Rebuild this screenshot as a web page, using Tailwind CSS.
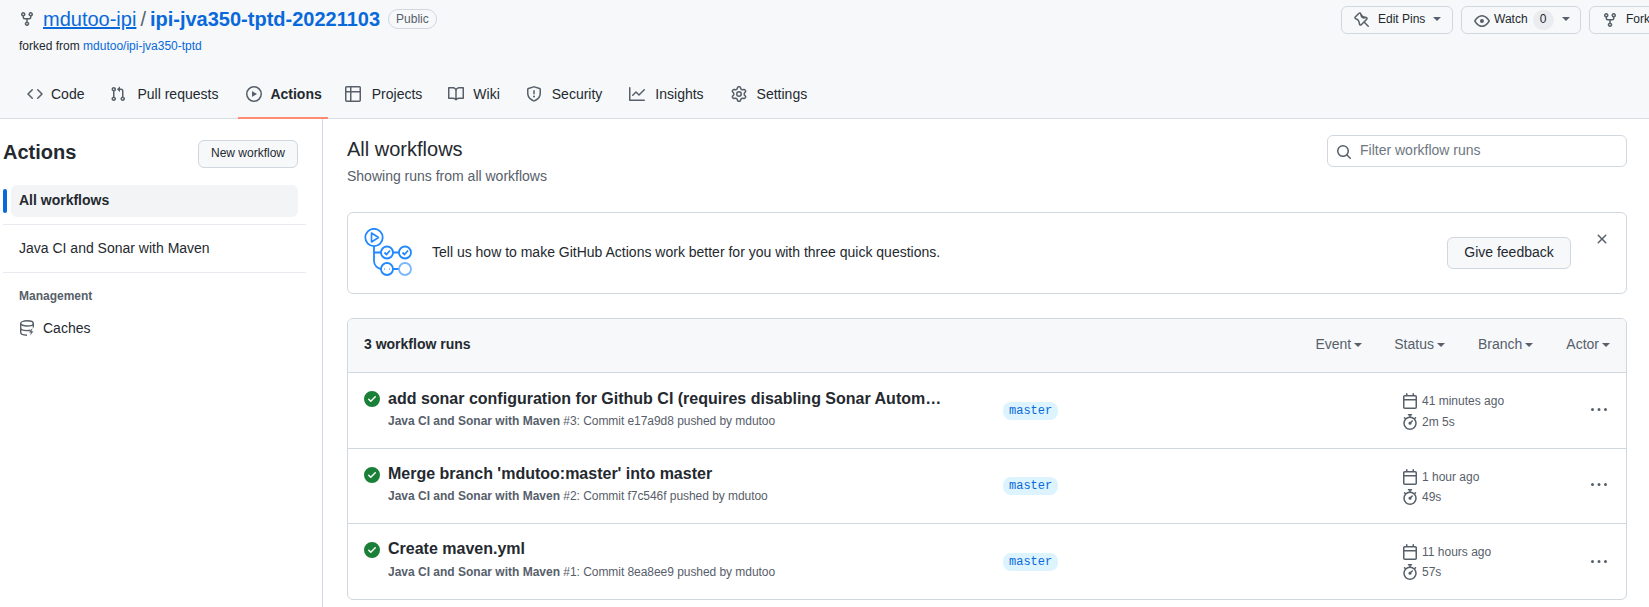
<!DOCTYPE html>
<html lang="en">

<head>
    <meta charset="UTF-8" />
    <meta name="viewport" content="width=device-width, initial-scale=1.0" />
    <title>Actions · mdutoo-ipi/ipi-jva350-tptd-20221103</title>
    <script src="https://cdn.jsdelivr.net/npm/@tailwindcss/browser@4"></script>
</head>

<body class="h-[607px] overflow-hidden bg-white text-sm text-[#24292f] font-['Liberation_Sans',Arial,sans-serif]">
    <!-- Icons used more than once -->
    <svg class="hidden">
        <symbol id="i-fork" viewBox="0 0 16 16"><path d="M5 5.372v.878c0 .414.336.75.75.75h4.5a.75.75 0 0 0 .75-.75v-.878a2.25 2.25 0 1 1 1.5 0v.878a2.25 2.25 0 0 1-2.25 2.25h-1.5v2.128a2.251 2.251 0 1 1-1.5 0V8.5h-1.5A2.25 2.25 0 0 1 3.5 6.25v-.878a2.25 2.25 0 1 1 1.5 0ZM5 3.25a.75.75 0 1 0-1.5 0 .75.75 0 0 0 1.5 0Zm6.75.75a.75.75 0 1 0 0-1.5.75.75 0 0 0 0 1.5Zm-3 8.75a.75.75 0 1 0-1.5 0 .75.75 0 0 0 1.5 0Z"/></symbol>
        <symbol id="i-check" viewBox="0 0 16 16"><path d="M8 16A8 8 0 1 1 8 0a8 8 0 0 1 0 16Zm3.78-9.72a.751.751 0 0 0-.018-1.042.751.751 0 0 0-1.042-.018L6.75 9.19 5.28 7.72a.751.751 0 0 0-1.042.018.751.751 0 0 0-.018 1.042l2 2a.75.75 0 0 0 1.06 0Z"/></symbol>
        <symbol id="i-calendar" viewBox="0 0 16 16"><path d="M4.75 0a.75.75 0 0 1 .75.75V2h5V.75a.75.75 0 0 1 1.5 0V2h1.25c.966 0 1.75.784 1.75 1.75v10.5A1.75 1.75 0 0 1 13.25 16H2.75A1.75 1.75 0 0 1 1 14.25V3.75C1 2.784 1.784 2 2.75 2H4V.75A.75.75 0 0 1 4.75 0ZM2.5 7.5v6.75c0 .138.112.25.25.25h10.5a.25.25 0 0 0 .25-.25V7.5Zm10.75-4H2.75a.25.25 0 0 0-.25.25V6h11V3.75a.25.25 0 0 0-.25-.25Z"/></symbol>
        <symbol id="i-stopwatch" viewBox="0 0 16 16"><path d="M5.75.75A.75.75 0 0 1 6.5 0h3a.75.75 0 0 1 0 1.5h-.75v1l-.001.041a6.724 6.724 0 0 1 3.464 1.435l.007-.006.75-.75a.75.75 0 1 1 1.06 1.06l-.75.75-.006.007a6.75 6.75 0 1 1-10.548 0L2.72 5.03l-.75-.75a.751.751 0 0 1 .018-1.042.751.751 0 0 1 1.042-.018l.75.75.007.006A6.72 6.72 0 0 1 7.25 2.541V1.5H6.5a.75.75 0 0 1-.75-.75ZM8 14.5a5.25 5.25 0 1 0-.001-10.501A5.25 5.25 0 0 0 8 14.5Zm.389-6.7 1.33-1.33a.75.75 0 1 1 1.061 1.06L9.45 8.861A1.503 1.503 0 0 1 8 10.75a1.499 1.499 0 1 1 .389-2.95Z"/></symbol>
        <symbol id="i-kebab" viewBox="0 0 16 16"><path d="M8 9a1.5 1.5 0 1 0 0-3 1.5 1.5 0 0 0 0 3ZM1.5 9a1.5 1.5 0 1 0 0-3 1.5 1.5 0 0 0 0 3Zm13 0a1.5 1.5 0 1 0 0-3 1.5 1.5 0 0 0 0 3Z"/></symbol>
    </svg>

    <!-- Repo header -->
    <header class="h-[119px] bg-[#f6f8fa] border-b border-[#d8dee4] flex flex-col">
        <div class="flex items-start pl-[19px] pt-[6px]">
            <div>
                <div class="flex items-center h-[25px]">
                    <svg class="w-4 h-4 fill-[#57606a] mr-2" viewBox="0 0 16 16"><use href="#i-fork" /></svg>
                    <a class="text-xl text-[#0969da] underline">mdutoo-ipi</a>
                    <span class="text-xl text-[#57606a] mx-[4px]">/</span>
                    <a class="text-xl font-bold text-[#0969da]">ipi-jva350-tptd-20221103</a>
                    <span class="ml-2 px-[7px] h-[20px] leading-[18px] rounded-full border border-[#d0d7de] text-xs text-[#57606a]">Public</span>
                </div>
                <p class="mt-[6px] text-xs leading-[18px]">forked from <a class="text-[#0969da]">mdutoo/ipi-jva350-tptd</a></p>
            </div>
            <div class="ml-auto w-[308px] overflow-hidden flex gap-2 shrink-0 text-xs">
                <button class="shrink-0 w-[112px] h-[28px] flex items-center pl-[12px] rounded-md border border-[#d0d7de] bg-[#f6f8fa]">
                    <svg class="w-4 h-4 fill-[#57606a] mr-[8px]" viewBox="0 0 16 16"><path d="M4.456.734a1.75 1.75 0 0 1 2.826.504l.613 1.327a3.081 3.081 0 0 0 2.084 1.707l2.454.584c1.332.317 1.8 1.972.832 2.94L11.06 10l3.72 3.72a.748.748 0 0 1-.332 1.265.75.75 0 0 1-.729-.205L10 11.06l-2.204 2.205c-.968.968-2.623.5-2.94-.832l-.584-2.454a3.081 3.081 0 0 0-1.707-2.084l-1.327-.613a1.75 1.75 0 0 1-.504-2.826L4.456.734ZM5.92 1.866a.25.25 0 0 0-.404-.072L1.794 5.516a.25.25 0 0 0 .072.404l1.328.613A4.582 4.582 0 0 1 5.73 9.63l.584 2.454a.25.25 0 0 0 .42.12l5.47-5.47a.25.25 0 0 0-.12-.42L9.63 6.73a4.581 4.581 0 0 1-3.098-2.537L5.92 1.866Z"/></svg>
                    <span class="mb-[2px]">Edit Pins</span>
                    <span class="ml-[8px] mb-[2px] border-x-[4px] border-x-transparent border-t-[4px] border-t-[#57606a]"></span>
                </button>
                <button class="shrink-0 w-[120px] h-[28px] flex items-center pl-[12px] rounded-md border border-[#d0d7de] bg-[#f6f8fa]">
                    <svg class="w-4 h-4 fill-[#57606a] mr-[4px] mt-[2px]" viewBox="0 0 16 16"><path d="M8 2c1.981 0 3.671.992 4.933 2.078 1.27 1.091 2.187 2.345 2.637 3.023a1.62 1.62 0 0 1 0 1.798c-.45.678-1.367 1.932-2.637 3.023C11.67 13.008 9.981 14 8 14c-1.981 0-3.671-.992-4.933-2.078C1.797 10.83.88 9.576.43 8.898a1.62 1.62 0 0 1 0-1.798c.45-.677 1.367-1.931 2.637-3.022C4.33 2.992 6.019 2 8 2ZM1.679 7.932a.12.12 0 0 0 0 .136c.411.622 1.241 1.75 2.366 2.717C5.176 11.758 6.527 12.5 8 12.5c1.473 0 2.825-.742 3.955-1.715 1.124-.967 1.954-2.096 2.366-2.717a.12.12 0 0 0 0-.136c-.412-.621-1.242-1.75-2.366-2.717C10.824 4.242 9.473 3.5 8 3.5c-1.473 0-2.825.742-3.955 1.715-1.124.967-1.954 2.096-2.366 2.717ZM8 10a2 2 0 1 1-.001-3.999A2 2 0 0 1 8 10Z"/></svg>
                    <span class="mb-[2px]">Watch</span>
                    <span class="ml-[5px] w-[21px] h-[20px] leading-[18px] rounded-full bg-[#eaecef] text-[#24292f]">0</span>
                    <span class="ml-[8px] mb-[2px] border-x-[4px] border-x-transparent border-t-[4px] border-t-[#57606a]"></span>
                </button>
                <button class="shrink-0 w-[100px] h-[28px] flex items-center pl-[12px] rounded-md border border-[#d0d7de] bg-[#f6f8fa]">
                    <svg class="w-4 h-4 fill-[#57606a] mr-[8px]" viewBox="0 0 16 16"><use href="#i-fork" /></svg>
                    <span class="mb-[2px]">Fork</span>
                </button>
            </div>
        </div>

        <!-- Tabs -->
        <nav class="mt-auto flex h-[48px] pl-[19px] translate-y-px">
            <a class="flex items-center gap-[8px] px-2 mr-[10px] border-b-2 border-transparent">
                <svg class="w-4 h-4 fill-[#57606a]" viewBox="0 0 16 16"><path d="m11.28 3.22 4.25 4.25a.75.75 0 0 1 0 1.06l-4.25 4.25a.749.749 0 0 1-1.275-.326.749.749 0 0 1 .215-.734L13.94 8l-3.72-3.72a.749.749 0 0 1 .326-1.275.749.749 0 0 1 .734.215Zm-6.56 0a.751.751 0 0 1 1.042.018.751.751 0 0 1 .018 1.042L2.06 8l3.72 3.72a.749.749 0 0 1-.326 1.275.749.749 0 0 1-.734-.215L.47 8.53a.75.75 0 0 1 0-1.06Z"/></svg>
                Code</a>
            <a class="flex items-center gap-[11px] px-2 mr-[12px] border-b-2 border-transparent">
                <svg class="w-4 h-4 fill-[#57606a]" viewBox="0 0 16 16"><path d="M1.5 3.25a2.25 2.25 0 1 1 3 2.122v5.256a2.251 2.251 0 1 1-1.5 0V5.372A2.25 2.25 0 0 1 1.5 3.25Zm5.677-.177L9.573.677A.25.25 0 0 1 10 .854V2.5h1A2.5 2.5 0 0 1 13.5 5v5.628a2.251 2.251 0 1 1-1.5 0V5a1 1 0 0 0-1-1h-1v1.646a.25.25 0 0 1-.427.177L7.177 3.427a.25.25 0 0 1 0-.354ZM3.75 2.5a.75.75 0 1 0 0 1.5.75.75 0 0 0 0-1.5Zm0 9.5a.75.75 0 1 0 0 1.5.75.75 0 0 0 0-1.5Zm8.25.75a.75.75 0 1 0 1.5 0 .75.75 0 0 0-1.5 0Z"/></svg>
                Pull requests</a>
            <a class="flex items-center gap-[8px] pl-2 pr-[6px] mr-[9px] font-bold border-b-2 border-[#fd8c73]">
                <svg class="w-4 h-4 fill-[#57606a]" viewBox="0 0 16 16"><path d="M8 0a8 8 0 1 1 0 16A8 8 0 0 1 8 0ZM1.5 8a6.5 6.5 0 1 0 13 0 6.5 6.5 0 0 0-13 0Zm4.879-2.773 4.264 2.559a.25.25 0 0 1 0 .428l-4.264 2.559A.25.25 0 0 1 6 10.559V5.442a.25.25 0 0 1 .379-.215Z"/></svg>
                Actions</a>
            <a class="flex items-center gap-[11px] px-2 mr-[10px] border-b-2 border-transparent">
                <svg class="w-4 h-4 fill-[#57606a]" viewBox="0 0 16 16"><path d="M0 1.75C0 .784.784 0 1.75 0h12.5C15.216 0 16 .784 16 1.75v12.5A1.75 1.75 0 0 1 14.25 16H1.75A1.75 1.75 0 0 1 0 14.25ZM6.5 6.5v8h7.75a.25.25 0 0 0 .25-.25V6.5Zm8-1.5V1.75a.25.25 0 0 0-.25-.25H6.5V5Zm-13 1.5v7.75c0 .138.112.25.25.25H5v-8ZM5 5V1.5H1.75a.25.25 0 0 0-.25.25V5Z"/></svg>
                Projects</a>
            <a class="flex items-center gap-[9px] px-2 mr-[10px] border-b-2 border-transparent">
                <svg class="w-4 h-4 fill-[#57606a]" viewBox="0 0 16 16"><path d="M0 1.75A.75.75 0 0 1 .75 1h4.253c1.227 0 2.317.59 3 1.501A3.743 3.743 0 0 1 11.006 1h4.245a.75.75 0 0 1 .75.75v10.5a.75.75 0 0 1-.75.75h-4.507a2.25 2.25 0 0 0-1.591.659l-.622.621a.75.75 0 0 1-1.06 0l-.622-.621A2.25 2.25 0 0 0 5.258 13H.75a.75.75 0 0 1-.75-.75Zm7.251 10.324.004-5.073-.002-2.253A2.25 2.25 0 0 0 5.003 2.5H1.5v9h3.757a3.75 3.75 0 0 1 1.994.574ZM8.755 4.75l-.004 7.322a3.752 3.752 0 0 1 1.992-.572H14.5v-9h-3.495a2.25 2.25 0 0 0-2.25 2.25Z"/></svg>
                Wiki</a>
            <a class="flex items-center gap-[10px] px-2 mr-[11px] border-b-2 border-transparent">
                <svg class="w-4 h-4 fill-[#57606a]" viewBox="0 0 16 16"><path d="M7.467.133a1.748 1.748 0 0 1 1.066 0l5.25 1.68A1.75 1.75 0 0 1 15 3.48V7c0 1.566-.32 3.182-1.303 4.682-.983 1.498-2.585 2.813-5.032 3.855a1.697 1.697 0 0 1-1.33 0c-2.447-1.042-4.049-2.357-5.032-3.855C1.32 10.182 1 8.566 1 7V3.48a1.75 1.75 0 0 1 1.217-1.667Zm.61 1.429a.25.25 0 0 0-.153 0l-5.25 1.68a.25.25 0 0 0-.174.238V7c0 1.358.275 2.666 1.057 3.86.784 1.194 2.121 2.34 4.366 3.297a.196.196 0 0 0 .154 0c2.245-.956 3.582-2.104 4.366-3.298C13.225 9.666 13.5 8.36 13.5 7V3.48a.251.251 0 0 0-.174-.237l-5.25-1.68ZM8.75 4.75v3a.75.75 0 0 1-1.5 0v-3a.75.75 0 0 1 1.5 0ZM9 10.5a1 1 0 1 1-2 0 1 1 0 0 1 2 0Z"/></svg>
                Security</a>
            <a class="flex items-center gap-[10px] px-2 mr-[11px] border-b-2 border-transparent">
                <svg class="w-4 h-4 fill-[#57606a]" viewBox="0 0 16 16"><path d="M1.5 1.75V13.5h13.75a.75.75 0 0 1 0 1.5H.75a.75.75 0 0 1-.75-.75V1.75a.75.75 0 0 1 1.5 0Zm14.28 2.53-5.25 5.25a.75.75 0 0 1-1.06 0L7 7.06 4.28 9.78a.751.751 0 0 1-1.042-.018.751.751 0 0 1-.018-1.042l3.25-3.25a.75.75 0 0 1 1.06 0L10 7.94l4.72-4.72a.751.751 0 0 1 1.042.018.751.751 0 0 1 .018 1.042Z"/></svg>
                Insights</a>
            <a class="flex items-center gap-[10px] px-2 border-b-2 border-transparent">
                <svg class="w-4 h-4 fill-[#57606a]" viewBox="0 0 16 16"><path d="M8 0a8.2 8.2 0 0 1 .701.031C9.444.095 9.99.645 10.16 1.29l.288 1.107c.018.066.079.158.212.224.231.114.454.243.668.386.123.082.233.09.299.071l1.103-.303c.644-.176 1.392.021 1.82.63.27.385.506.792.704 1.218.315.675.111 1.422-.364 1.891l-.814.806c-.049.048-.098.147-.088.294.016.257.016.515 0 .772-.01.147.038.246.088.294l.814.806c.475.469.679 1.216.364 1.891a7.977 7.977 0 0 1-.704 1.217c-.428.61-1.176.807-1.82.63l-1.102-.302c-.067-.019-.177-.011-.3.071a5.909 5.909 0 0 1-.668.386c-.133.066-.194.158-.211.224l-.29 1.106c-.168.646-.715 1.196-1.458 1.26a8.006 8.006 0 0 1-1.402 0c-.743-.064-1.289-.614-1.458-1.26l-.289-1.106c-.018-.066-.079-.158-.212-.224a5.738 5.738 0 0 1-.668-.386c-.123-.082-.233-.09-.299-.071l-1.103.303c-.644.176-1.392-.021-1.82-.63a8.12 8.12 0 0 1-.704-1.218c-.315-.675-.111-1.422.363-1.891l.815-.806c.05-.048.098-.147.088-.294a6.214 6.214 0 0 1 0-.772c.01-.147-.038-.246-.088-.294l-.815-.806C.635 6.045.431 5.298.746 4.623a7.92 7.92 0 0 1 .704-1.217c.428-.61 1.176-.807 1.82-.63l1.102.302c.067.019.177.011.3-.071.214-.143.437-.272.668-.386.133-.066.194-.158.211-.224l.29-1.106C6.009.645 6.556.095 7.299.03 7.53.01 7.764 0 8 0Zm-.571 1.525c-.036.003-.108.036-.137.146l-.289 1.105c-.147.561-.549.967-.998 1.189-.173.086-.34.183-.5.29-.417.278-.97.423-1.529.27l-1.103-.303c-.109-.03-.175.016-.195.045-.22.312-.412.644-.573.99-.014.031-.021.11.059.19l.815.806c.411.406.562.957.53 1.456a4.709 4.709 0 0 0 0 .582c.032.499-.119 1.05-.53 1.456l-.815.806c-.081.08-.073.159-.059.19.162.346.353.677.573.989.02.03.085.076.195.046l1.102-.303c.56-.153 1.113-.008 1.53.27.161.107.328.204.501.29.447.222.85.629.997 1.189l.289 1.105c.029.109.101.143.137.146a6.6 6.6 0 0 0 1.142 0c.036-.003.108-.036.137-.146l.289-1.105c.147-.561.549-.967.998-1.189.173-.086.34-.183.5-.29.417-.278.97-.423 1.529-.27l1.103.303c.109.029.175-.016.195-.045.22-.313.411-.644.573-.99.014-.031.021-.11-.059-.19l-.815-.806c-.411-.406-.562-.957-.53-1.456a4.709 4.709 0 0 0 0-.582c-.032-.499.119-1.05.53-1.456l.815-.806c.081-.08.073-.159.059-.19a6.464 6.464 0 0 0-.573-.989c-.02-.03-.085-.076-.195-.046l-1.102.303c-.56.153-1.113.008-1.53-.27a4.44 4.44 0 0 0-.501-.29c-.447-.222-.85-.629-.997-1.189l-.289-1.105c-.029-.11-.101-.143-.137-.146a6.6 6.6 0 0 0-1.142 0ZM11 8a3 3 0 1 1-6 0 3 3 0 0 1 6 0ZM9.5 8a1.5 1.5 0 1 0-3.001.001A1.5 1.5 0 0 0 9.5 8Z"/></svg>
                Settings</a>
        </nav>
    </header>

    <div class="flex h-[488px]">
        <!-- Sidebar -->
        <aside class="w-[323px] shrink-0 border-r border-[#d0d7de] pl-[3px] pr-[16px]">
            <div class="flex items-center justify-between pt-[21px] pr-[8px]">
                <h1 class="text-xl font-bold leading-[24px] mb-[4px]">Actions</h1>
                <button class="w-[100px] h-[28px] pb-[2px] text-xs rounded-md border border-[#d0d7de] bg-[#f6f8fa]">New workflow</button>
            </div>
            <div class="relative mt-[17px] ml-[8px] mr-[8px] h-[32px] rounded-md bg-[#f3f4f6] pl-[8px] font-bold leading-[30px]">
                All workflows
                <span class="absolute left-[-8px] top-[4px] w-[4px] h-[24px] rounded-md bg-[#0969da]"></span>
            </div>
            <div class="mt-[7px] h-[49px] flex items-center pl-[16px] pb-[2px] border-y border-[#e7ebef]">Java CI and Sonar with Maven</div>
            <p class="mt-[14px] pl-[16px] text-xs font-bold leading-[18px] text-[#57606a]">Management</p>
            <a class="mt-[13px] pl-[16px] flex items-center gap-[8px]">
                <svg class="w-4 h-4 fill-none stroke-[#57606a] stroke-[1.4]" viewBox="0 0 16 16">
                    <ellipse cx="8" cy="3.4" rx="6.3" ry="2.6" />
                    <path d="M1.7 3.4v9.2c0 1.4 2.6 2.6 6.3 2.6M1.7 8c0 1.4 2.6 2.6 6.3 2.6 1.4 0 2.5-.2 3.5-.5M14.3 3.4v4.2" />
                    <path class="fill-[#57606a] stroke-none" d="M13 8.5l-3 4h2l-1 3.2 3.4-4.4h-2l1.2-2.8Z" />
                </svg>
                Caches</a>
        </aside>

        <!-- Main -->
        <main class="flex-1 pl-[24px] pr-[22px]">
            <div class="flex items-start justify-between pt-[16px]">
                <div>
                    <h2 class="text-xl leading-[28px]">All workflows</h2>
                    <p class="mt-[1px] text-[#57606a] leading-[24px]">Showing runs from all workflows</p>
                </div>
                <div class="w-[300px] h-[32px] flex items-center rounded-md border border-[#d0d7de] pl-[8px] text-[#6e7781]">
                    <svg class="w-4 h-4 fill-[#57606a] mr-[8px] mt-[2px]" viewBox="0 0 16 16"><path d="M10.68 11.74a6 6 0 0 1-7.922-8.982 6 6 0 0 1 8.982 7.922l3.04 3.04a.749.749 0 0 1-.326 1.275.749.749 0 0 1-.734-.215ZM11.5 7a4.499 4.499 0 1 0-8.997 0A4.499 4.499 0 0 0 11.5 7Z"/></svg>
                    <span class="mb-[2px]">Filter workflow runs</span>
                </div>
            </div>

            <!-- Feedback banner -->
            <div class="relative mt-[24px] h-[82px] flex items-center rounded-md border border-[#d0d7de] pl-[16px]">
                <svg class="w-[48px] h-[52px] mt-[2px] fill-none stroke-[#2188ff] stroke-[1.8]" viewBox="0 0 48 52">
                    <circle cx="10" cy="9.5" r="8.7" />
                    <path class="stroke-[1.6]" stroke-linejoin="round" d="M7.5 5v9l7-4.5Z" />
                    <path d="M10 18v15a8 8 0 0 0 8 8h-1M10 24.5h7M29 24.5h6M29 41h6" />
                    <circle cx="23" cy="24.5" r="6" />
                    <circle cx="41" cy="24.5" r="6" />
                    <path d="M20.5 24.5l2 2 3.5-4M38.5 24.5l2 2 3.5-4" />
                    <circle cx="23" cy="41" r="6" />
                    <path d="M20.5 41h.5M25 41h.5" />
                    <circle class="stroke-[#79b8ff]" cx="41" cy="41" r="6" />
                </svg>
                <span class="ml-[20px] mb-[2px]">Tell us how to make GitHub Actions work better for you with three quick questions.</span>
                <button class="ml-auto mr-[55px] w-[124px] h-[32px] pb-[2px] rounded-md border border-[#d0d7de] bg-[#f6f8fa]">Give feedback</button>
                <svg class="absolute right-[16px] top-[18px] w-4 h-4 fill-[#57606a]" viewBox="0 0 16 16"><path d="M3.72 3.72a.75.75 0 0 1 1.06 0L8 6.94l3.22-3.22a.749.749 0 0 1 1.275.326.749.749 0 0 1-.215.734L9.06 8l3.22 3.22a.749.749 0 0 1-.326 1.275.749.749 0 0 1-.734-.215L8 9.06l-3.22 3.22a.751.751 0 0 1-1.042-.018.751.751 0 0 1-.018-1.042L6.94 8 3.72 4.78a.75.75 0 0 1 0-1.06Z"/></svg>
            </div>

            <!-- Runs list -->
            <div class="mt-[24px] rounded-md border border-[#d0d7de] overflow-hidden">
                <div class="h-[53px] flex items-center bg-[#f6f8fa] pl-[16px] pr-[16px] pb-[4px]">
                    <span class="font-bold">3 workflow runs</span>
                    <div class="ml-auto flex gap-[33px] text-[#57606a]">
                        <span class="flex items-center gap-[3px] mr-[-1px]">Event <i class="mt-[2px] border-x-[4px] border-x-transparent border-t-[4px] border-t-[#57606a]"></i></span>
                        <span class="flex items-center gap-[3px]">Status <i class="mt-[2px] border-x-[4px] border-x-transparent border-t-[4px] border-t-[#57606a]"></i></span>
                        <span class="flex items-center gap-[3px]">Branch <i class="mt-[2px] border-x-[4px] border-x-transparent border-t-[4px] border-t-[#57606a]"></i></span>
                        <span class="flex items-center gap-[3px]">Actor <i class="mt-[2px] border-x-[4px] border-x-transparent border-t-[4px] border-t-[#57606a]"></i></span>
                    </div>
                </div>

                <div class="h-[76px] border-t border-[#d0d7de] flex pl-[16px] pt-[16px]">
                    <svg class="w-4 h-4 fill-[#1a7f37] mt-[2px] shrink-0" viewBox="0 0 16 16"><use href="#i-check" /></svg>
                    <div class="ml-[8px] w-[556px] shrink-0">
                        <p class="text-base font-bold leading-[20px] truncate">add sonar configuration for Github CI (requires disabling Sonar Automatic Analysis)</p>
                        <p class="mt-[3px] text-xs leading-[18px] text-[#57606a] tracking-[-0.05px]"><b class="tracking-normal">Java CI and Sonar with Maven</b> #3: Commit e17a9d8 pushed by mdutoo</p>
                    </div>
                    <span class="ml-[59px] mt-[13px] h-[18px] px-[6px] rounded-lg bg-[#ddf4ff] text-[#0969da] text-xs leading-[18px] font-['Liberation_Mono',monospace]">master</span>
                    <div class="ml-auto w-[189px] mt-[2px] text-xs text-[#57606a] leading-[20px]">
                        <p class="flex items-center gap-[4px]"><svg class="w-4 h-4 fill-[#57606a]" viewBox="0 0 16 16"><use href="#i-calendar" /></svg>41 minutes ago</p>
                        <p class="flex items-center gap-[4px] mt-[1px]"><svg class="w-4 h-4 fill-[#57606a]" viewBox="0 0 16 16"><use href="#i-stopwatch" /></svg>2m 5s</p>
                    </div>
                    <svg class="mt-[13px] mr-[19px] w-4 h-4 fill-[#57606a]" viewBox="0 0 16 16"><use href="#i-kebab" /></svg>
                </div>

                <div class="h-[75px] border-t border-[#d0d7de] flex pl-[16px] pt-[15px]">
                    <svg class="w-4 h-4 fill-[#1a7f37] mt-[3px] shrink-0" viewBox="0 0 16 16"><use href="#i-check" /></svg>
                    <div class="ml-[8px] w-[556px] shrink-0">
                        <p class="text-base font-bold leading-[20px] truncate">Merge branch 'mdutoo:master' into master</p>
                        <p class="mt-[3px] text-xs leading-[18px] text-[#57606a] tracking-[-0.05px]"><b class="tracking-normal">Java CI and Sonar with Maven</b> #2: Commit f7c546f pushed by mdutoo</p>
                    </div>
                    <span class="ml-[59px] mt-[13px] h-[18px] px-[6px] rounded-lg bg-[#ddf4ff] text-[#0969da] text-xs leading-[18px] font-['Liberation_Mono',monospace]">master</span>
                    <div class="ml-auto w-[189px] mt-[3px] text-xs text-[#57606a] leading-[20px]">
                        <p class="flex items-center gap-[4px]"><svg class="w-4 h-4 fill-[#57606a]" viewBox="0 0 16 16"><use href="#i-calendar" /></svg>1 hour ago</p>
                        <p class="flex items-center gap-[4px]"><svg class="w-4 h-4 fill-[#57606a]" viewBox="0 0 16 16"><use href="#i-stopwatch" /></svg>49s</p>
                    </div>
                    <svg class="mt-[13px] mr-[19px] w-4 h-4 fill-[#57606a]" viewBox="0 0 16 16"><use href="#i-kebab" /></svg>
                </div>

                <div class="h-[76px] border-t border-[#d0d7de] flex pl-[16px] pt-[15px]">
                    <svg class="w-4 h-4 fill-[#1a7f37] mt-[3px] shrink-0" viewBox="0 0 16 16"><use href="#i-check" /></svg>
                    <div class="ml-[8px] w-[556px] shrink-0">
                        <p class="text-base font-bold leading-[20px] truncate">Create maven.yml</p>
                        <p class="mt-[4px] text-xs leading-[18px] text-[#57606a] tracking-[-0.05px]"><b class="tracking-normal">Java CI and Sonar with Maven</b> #1: Commit 8ea8ee9 pushed by mdutoo</p>
                    </div>
                    <span class="ml-[59px] mt-[14px] h-[18px] px-[6px] rounded-lg bg-[#ddf4ff] text-[#0969da] text-xs leading-[18px] font-['Liberation_Mono',monospace]">master</span>
                    <div class="ml-auto w-[189px] mt-[3px] text-xs text-[#57606a] leading-[20px]">
                        <p class="flex items-center gap-[4px]"><svg class="w-4 h-4 fill-[#57606a]" viewBox="0 0 16 16"><use href="#i-calendar" /></svg>11 hours ago</p>
                        <p class="flex items-center gap-[4px]"><svg class="w-4 h-4 fill-[#57606a]" viewBox="0 0 16 16"><use href="#i-stopwatch" /></svg>57s</p>
                    </div>
                    <svg class="mt-[15px] mr-[19px] w-4 h-4 fill-[#57606a]" viewBox="0 0 16 16"><use href="#i-kebab" /></svg>
                </div>
            </div>
        </main>
    </div>
</body>

</html>
